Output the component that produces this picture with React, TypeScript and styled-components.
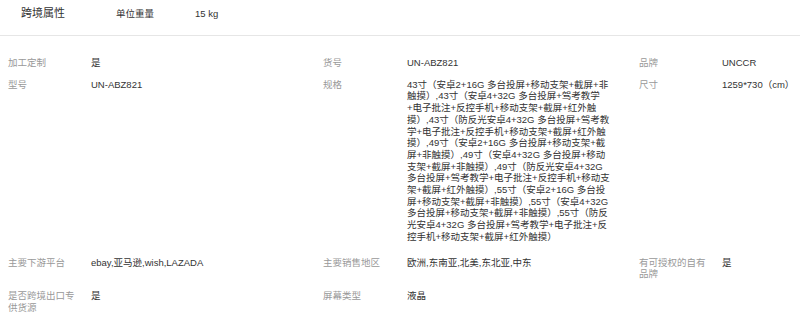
import React from 'react';
import styled, { createGlobalStyle } from 'styled-components';

const GlobalStyle = createGlobalStyle`
  html, body {
    margin: 0;
    padding: 0;
    background: #fff;
  }
  body {
    font-family: "Liberation Sans", Arial, "Noto Sans CJK SC", sans-serif;
  }
`;

interface IAttr {
  label: string;
  value: string;
}

const spec =
  '43寸（安卓2+16G 多台投屏+移动支架+截屏+非触摸）,43寸（安卓4+32G 多台投屏+驾考教学+电子批注+反控手机+移动支架+截屏+红外触摸）,43寸（防反光安卓4+32G 多台投屏+驾考教学+电子批注+反控手机+移动支架+截屏+红外触摸）,49寸（安卓2+16G 多台投屏+移动支架+截屏+非触摸）,49寸（安卓4+32G 多台投屏+移动支架+截屏+非触摸）,49寸（防反光安卓4+32G 多台投屏+驾考教学+电子批注+反控手机+移动支架+截屏+红外触摸）,55寸（安卓2+16G 多台投屏+移动支架+截屏+非触摸）,55寸（安卓4+32G 多台投屏+移动支架+截屏+非触摸）,55寸（防反光安卓4+32G 多台投屏+驾考教学+电子批注+反控手机+移动支架+截屏+红外触摸）';

const attrs: IAttr[] = [
  { label: '加工定制', value: '是' },
  { label: '货号', value: 'UN-ABZ821' },
  { label: '品牌', value: 'UNCCR' },
  { label: '型号', value: 'UN-ABZ821' },
  { label: '规格', value: spec },
  { label: '尺寸', value: '1259*730（cm）' },
  { label: '主要下游平台', value: 'ebay,亚马逊,wish,LAZADA' },
  { label: '主要销售地区', value: '欧洲,东南亚,北美,东北亚,中东' },
  { label: '有可授权的自有品牌', value: '是' },
  { label: '是否跨境出口专供货源', value: '是' },
  { label: '屏幕类型', value: '液晶' },
];

export default function App() {
  return (
    <>
      <GlobalStyle />
      <Page>
        <Header>
          <Title>跨境属性</Title>
          <HeaderLabel>单位重量</HeaderLabel>
          <HeaderValue>15 kg</HeaderValue>
        </Header>

        <AttrGrid>
          {attrs.map((a, i) => (
            <React.Fragment key={i}>
              <Label>{a.label}</Label>
              <Value>{a.value}</Value>
            </React.Fragment>
          ))}
        </AttrGrid>
      </Page>
    </>
  );
}

const Page = styled.div`
  width: 800px;
  height: 324px;
  overflow: hidden;
`;

const Header = styled.div`
  display: flex;
  align-items: baseline;
  height: 36px;
  box-sizing: border-box;
  padding: 4px 0 0 21px;
  border-bottom: 1px solid #e6e6e6;
`;

const Title = styled.span`
  font-size: 11px;
  color: #333;
  width: 95px;
`;

const HeaderLabel = styled.span`
  font-size: 9.5px;
  color: #333;
  width: 79px;
`;

const HeaderValue = styled.span`
  font-size: 9.5px;
  color: #333;
`;

const AttrGrid = styled.div`
  display: grid;
  grid-template-columns: 83px 232px 84px 232px 83px 1fr;
  padding: 16px 0 0 8px;
  font-size: 9.5px;
  line-height: 11.7px;
`;

const Label = styled.div`
  color: #999;
  padding: 5px 12px 5px 0;
`;

const Value = styled.div`
  color: #333;
  padding: 5px 25px 5px 0;
  word-break: break-all;

  &:nth-child(6n) {
    padding-right: 0;
  }

  &:nth-child(10) {
    padding-bottom: 9px;
  }
`;
